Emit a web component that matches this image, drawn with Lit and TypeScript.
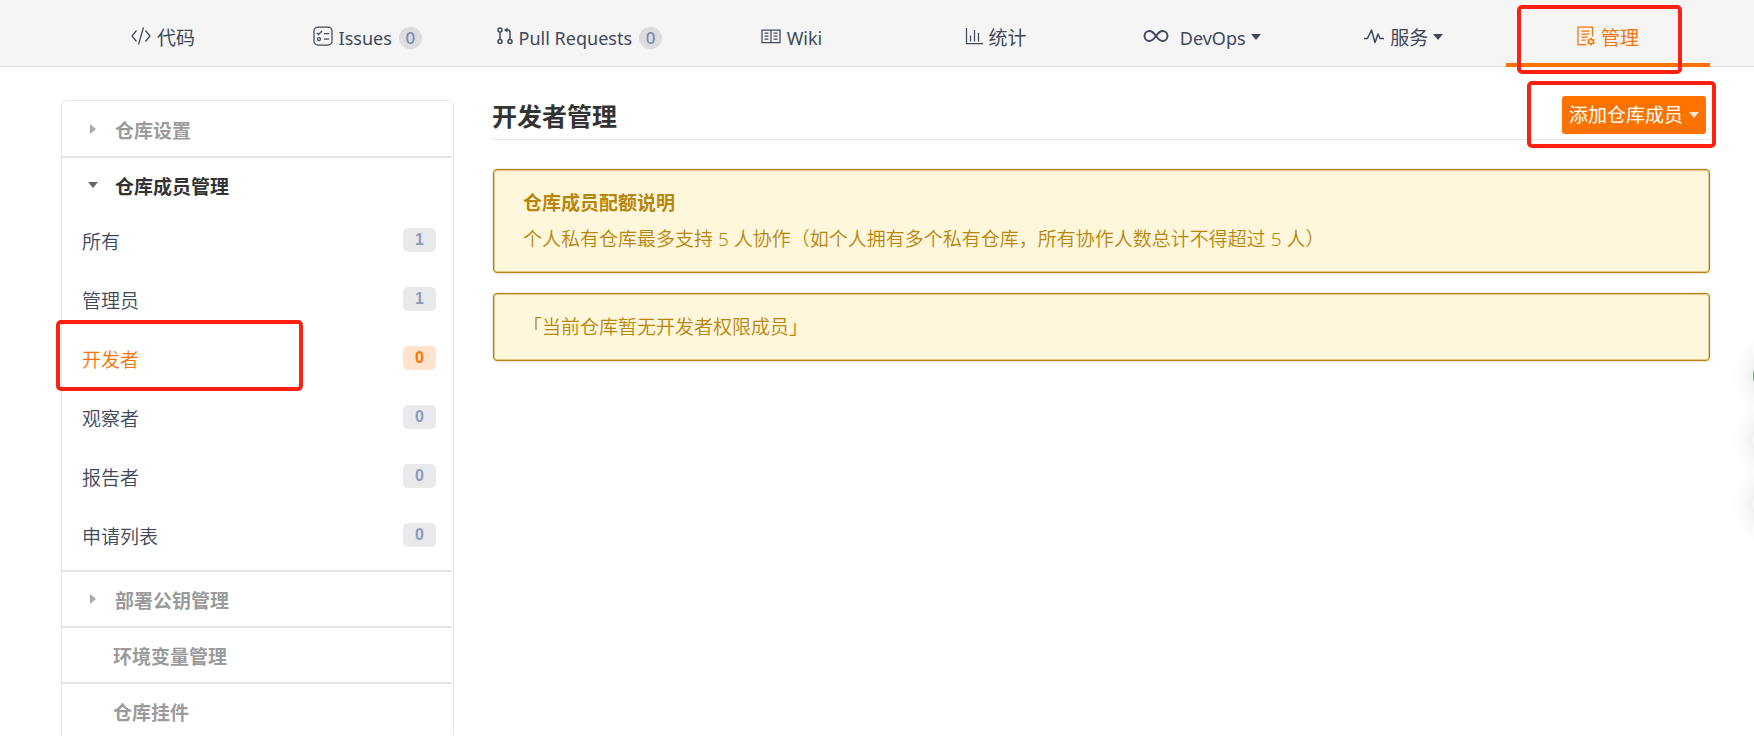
import { LitElement, html, svg, css, nothing } from "lit";
import { customElement, property } from "lit/decorators.js";
import { classMap } from "lit/directives/class-map.js";

interface Tab {
  icon: string;
  label: string;
  count?: number;
  menu?: boolean;
  wide?: boolean;
  active?: boolean;
}

const TABS: Tab[] = [
  { icon: "code", label: "代码" },
  { icon: "issues", label: "Issues", count: 0 },
  { icon: "pulls", label: "Pull Requests", count: 0, wide: true },
  { icon: "wiki", label: "Wiki" },
  { icon: "stats", label: "统计" },
  { icon: "devops", label: "DevOps", menu: true },
  { icon: "pulse", label: "服务", menu: true },
  { icon: "manage", label: "管理", active: true },
];

const ROLES = [
  { label: "所有", count: 1 },
  { label: "管理员", count: 1 },
  { label: "开发者", count: 0, active: true },
  { label: "观察者", count: 0 },
  { label: "报告者", count: 0 },
  { label: "申请列表", count: 0 },
];

const ICONS: Record<string, { w: number; h: number; body: unknown }> = {
  code: {
    w: 20,
    h: 20,
    body: svg`<path d="M5.5 4.5 1 10l4.5 5.500M14.500 4.500 19 10l-4.500 5.500M12.500 1.500l-5 17"/>`,
  },
  issues: {
    w: 20,
    h: 20,
    body: svg`<rect x="1" y="1" width="18" height="18" rx="4"/>
      <path d="M4 7l1.500 1.500L9 5M11 7.500h5M11 13h5"/><circle cx="6" cy="13" r="1.500"/>`,
  },
  pulls: {
    w: 16,
    h: 20,
    body: svg`<g stroke-width="1.500"><circle cx="3" cy="4" r="2"/><circle cx="3" cy="15.500" r="2"/>
      <circle cx="13" cy="15.500" r="2"/><path d="M3 6v7.500M13 13.500V6q0-2-2-2H8"/></g>
      <path d="M10.500 1.500v5L7 4z" fill="currentColor" stroke="none"/>`,
  },
  wiki: {
    w: 20,
    h: 20,
    body: svg`<path d="M1 4h18v12.500H1zM10 4v12.500M3.500 7h4M3.500 10h4M3.500 13h4M12.500 7h4M12.500 10h4M12.500 13h4"/>`,
  },
  stats: {
    w: 18,
    h: 20,
    body: svg`<path d="M1.500 2v15.500H18M5.500 15.500V9.500M9.500 15.500V4M13.500 15.500V7"/>`,
  },
  devops: {
    w: 26,
    h: 20,
    body: svg`<path stroke-width="2" d="M13 10C10.500 6.500 9 5 6.500 5a5 5 0 0 0 0 10C9 15 10.500 13.500 13 10s4-5 6.500-5a5 5 0 0 1 0 10C17 15 15.500 13.500 13 10z"/>`,
  },
  pulse: {
    w: 20,
    h: 20,
    body: svg`<path stroke-width="1.500" stroke-linejoin="round" d="M0 12.500h3.500L7.500 4l3.500 12.500L14 8l2 4.500h4"/>`,
  },
  manage: {
    w: 18,
    h: 20,
    body: svg`<path d="M9.500 18.500H1V1h14.500v9.500M4.500 5h8M4.500 8h8M4.500 11h6M4.500 14h4"/>
      <path stroke-width="1.500" d="M14 12.500l1 1.200 1.800.3-.6 1.600.6 1.600-1.800.3-1 1.200-1-1.200-1.800-.3.600-1.600-.6-1.600 1.800-.3z"/>`,
  },
};

const icon = (name: string) => {
  const { w, h, body } = ICONS[name];
  return html`<svg
    class="icon"
    width=${w}
    height=${h}
    viewBox="0 0 ${w} ${h}"
    fill="none"
    stroke="currentColor"
    stroke-width="1.25"
    aria-hidden="true"
  >${body}</svg>`;
};

@customElement("repo-tabs")
export class RepoTabs extends LitElement {
  static styles = css`
    :host {
      display: block;
      background: #f5f5f5;
      border-bottom: 1px solid #dcddde;
    }
    .tabs {
      display: flex;
      padding: 0 44px 0 61px;
    }
    .tab {
      position: relative;
      flex: 204 1 0;
      display: flex;
      align-items: center;
      justify-content: center;
      height: 66px;
      padding-top: 10px;
      box-sizing: border-box;
      color: #40485b;
      font-size: 19px;
      line-height: 28px;
      white-space: nowrap;
      text-decoration: none;
    }
    .wide {
      flex-grow: 220;
    }
    .latin {
      font-size: 18px;
    }
    .active {
      color: #fe7300;
    }
    .active::after {
      content: "";
      position: absolute;
      inset: auto 0 -1px;
      height: 4px;
      background: #fe7300;
    }
    .icon {
      flex: none;
      margin: 0 6px 4px 0;
    }
    .spaced .icon {
      margin: 0 11px 4px 4px;
    }
    .count {
      min-width: 23px;
      height: 22px;
      margin-left: 7px;
      border-radius: 11px;
      background: #dcddde;
      color: #7d8ab0;
      font-size: 17px;
      font-weight: 500;
      line-height: 22px;
      text-align: center;
    }
    .caret {
      margin: 0 0 3px 5px;
      border: 5px solid transparent;
      border-top: 6px solid currentColor;
      border-bottom: 0;
    }
    .mark {
      position: absolute;
      z-index: 2;
      inset: 5px 28px -8px 11px;
      border: 4px solid #ff2012;
      border-radius: 5px;
      pointer-events: none;
    }
  `;

  render() {
    return html`<nav class="tabs" aria-label="仓库">
      ${TABS.map(
        (t) => html`<a
          href="#"
          class=${classMap({
            tab: true,
            wide: !!t.wide,
            active: !!t.active,
            latin: /^[A-Z]/.test(t.label),
            spaced: t.icon === "devops",
          })}
          >${icon(t.icon)}<span>${t.label}</span>${t.count === undefined
            ? nothing
            : html`<span class="count">${t.count}</span>`}${t.menu
            ? html`<span class="caret"></span>`
            : nothing}${t.active ? html`<span class="mark"></span>` : nothing}</a
        >`
      )}
    </nav>`;
  }
}

@customElement("side-section")
export class SideSection extends LitElement {
  @property() label = "";
  @property() state: "closed" | "open" | "plain" = "closed";

  static styles = css`
    :host {
      display: block;
      margin-right: 1px;
      border-bottom: 2px solid #e2e5e6;
    }
    :host(:last-of-type) {
      border-bottom: 0;
    }
    .head {
      display: flex;
      align-items: center;
      gap: 16px;
      width: 100%;
      height: 54px;
      padding: 4px 0 0 25px;
      border: 0;
      background: none;
      color: #9b9b9b;
      font: inherit;
      font-size: 19px;
      font-weight: 600;
      line-height: 28px;
      text-align: left;
    }
    .open {
      color: #333;
    }
    .plain {
      padding-left: 51px;
    }
    .caret {
      display: flex;
      justify-content: center;
      width: 12px;
      margin-bottom: 4px;
    }
    .caret::before {
      content: "";
      border: 5px solid transparent;
      border-left: 6px solid #aaa;
      border-right: 0;
    }
    .open .caret::before {
      border: 5px solid transparent;
      border-top: 6px solid #666;
      border-bottom: 0;
    }
  `;

  render() {
    return html`<button
        type="button"
        class=${classMap({ head: true, open: this.state === "open", plain: this.state === "plain" })}
      >
        ${this.state === "plain" ? nothing : html`<span class="caret"></span>`}
        <span>${this.label}</span>
      </button>
      <slot></slot>`;
  }
}

@customElement("app-root")
export class AppRoot extends LitElement {
  static styles = css`
    :host {
      display: block;
      position: relative;
      height: 100vh;
      overflow: hidden;
      background: #fff;
      color: #333;
      font-family: "Noto Sans", "Noto Sans CJK SC", sans-serif;
      font-size: 19px;
      line-height: 28px;
    }
    .page {
      display: flex;
      align-items: flex-start;
      gap: 38px;
      padding: 33px 44px 0 61px;
    }
    .side {
      flex: none;
      width: 393px;
      padding-top: 1px;
      box-sizing: border-box;
      border: 1px solid #e2e5e6;
      border-radius: 5px;
    }
    .roles {
      margin: 0;
      padding: 0 0 4px;
      list-style: none;
    }
    .role {
      position: relative;
      display: flex;
      align-items: center;
      justify-content: space-between;
      height: 59px;
      padding: 0 16px 0 20px;
      color: #40485b;
      font-weight: 350;
      text-decoration: none;
    }
    .badge {
      width: 33px;
      height: 24px;
      margin-bottom: 4px;
      border-radius: 5px;
      background: #e7e9eb;
      color: #8d9bbf;
      font-family: "Liberation Sans", sans-serif;
      font-size: 16px;
      font-weight: 700;
      line-height: 24px;
      text-align: center;
    }
    .current {
      color: #fe7300;
    }
    .current .badge {
      background: #ffe3cc;
      color: #fe7300;
    }
    .main {
      flex: 1;
      min-width: 0;
    }
    .title-bar {
      display: flex;
      align-items: center;
      justify-content: space-between;
      height: 39px;
      margin-bottom: 29px;
      padding: 0 4px 0 0;
      border-bottom: 1px solid #e5e5e5;
    }
    .title {
      margin: 0;
      padding-bottom: 8px;
      font-size: 25px;
      font-weight: 700;
      line-height: 36px;
    }
    .add {
      position: relative;
      display: flex;
      align-items: center;
      gap: 6px;
      height: 38px;
      margin-bottom: 9px;
      padding: 0 7px;
      border: 0;
      border-radius: 3px;
      background: #fe7300;
      color: #fff;
      font: inherit;
    }
    .caret {
      border: 5px solid transparent;
      border-top: 6px solid #ffe3cc;
      border-bottom: 0;
    }
    .note {
      margin: 0 0 20px 1px;
      padding: 19px 29px;
      border: 1px solid #b8860b;
      border-radius: 4px;
      box-shadow: inset 0 0 0 1px #e3c887, 0 0 0 1px #eceae6;
      background: #fff7db;
      color: #b8860b;
      font-weight: 350;
    }
    .note-title {
      margin: 0 0 8px;
      font-size: 19px;
      font-weight: 700;
      line-height: 28px;
    }
    .note-text {
      margin: 0;
    }
    .mark {
      position: absolute;
      border: 4px solid #ff2012;
      border-radius: 5px;
      pointer-events: none;
    }
    .add .mark {
      inset: -15px -10px -14px -35px;
    }
    .role .mark {
      inset: -10px 149px -2px -6px;
    }
    .floats {
      position: absolute;
      top: 354px;
      right: -43px;
      display: grid;
      gap: 20px;
    }
    .float {
      width: 44px;
      height: 44px;
      border: 0;
      border-radius: 22px;
      background: #fff;
      box-shadow: 0 0 24px rgba(0, 0, 0, 0.15);
    }
    .green {
      background: #45b549;
    }
  `;

  render() {
    return html`
      <repo-tabs></repo-tabs>
      <div class="page">
        <aside class="side">
          <side-section label="仓库设置"></side-section>
          <side-section label="仓库成员管理" state="open">
            <ul class="roles">
              ${ROLES.map(
                (r) => html`<li>
                  <a href="#" class=${classMap({ role: true, current: !!r.active })}>
                    <span>${r.label}</span><span class="badge">${r.count}</span>
                    ${r.active ? html`<span class="mark"></span>` : nothing}
                  </a>
                </li>`
              )}
            </ul>
          </side-section>
          <side-section label="部署公钥管理"></side-section>
          <side-section label="环境变量管理" state="plain"></side-section>
          <side-section label="仓库挂件" state="plain"></side-section>
        </aside>
        <main class="main">
          <header class="title-bar">
            <h1 class="title">开发者管理</h1>
            <button type="button" class="add">
              <span>添加仓库成员</span><span class="caret"></span><span class="mark"></span>
            </button>
          </header>
          <section class="note">
            <h2 class="note-title">仓库成员配额说明</h2>
            <p class="note-text">
              个人私有仓库最多支持 5 人协作（如个人拥有多个私有仓库，所有协作人数总计不得超过 5 人）
            </p>
          </section>
          <section class="note">
            <p class="note-text">「当前仓库暂无开发者权限成员」</p>
          </section>
        </main>
      </div>
      <div class="floats">
        <button type="button" class="float green" aria-label="客服"></button>
        <button type="button" class="float" aria-label="反馈"></button>
        <button type="button" class="float" aria-label="返回顶部"></button>
      </div>
    `;
  }
}
